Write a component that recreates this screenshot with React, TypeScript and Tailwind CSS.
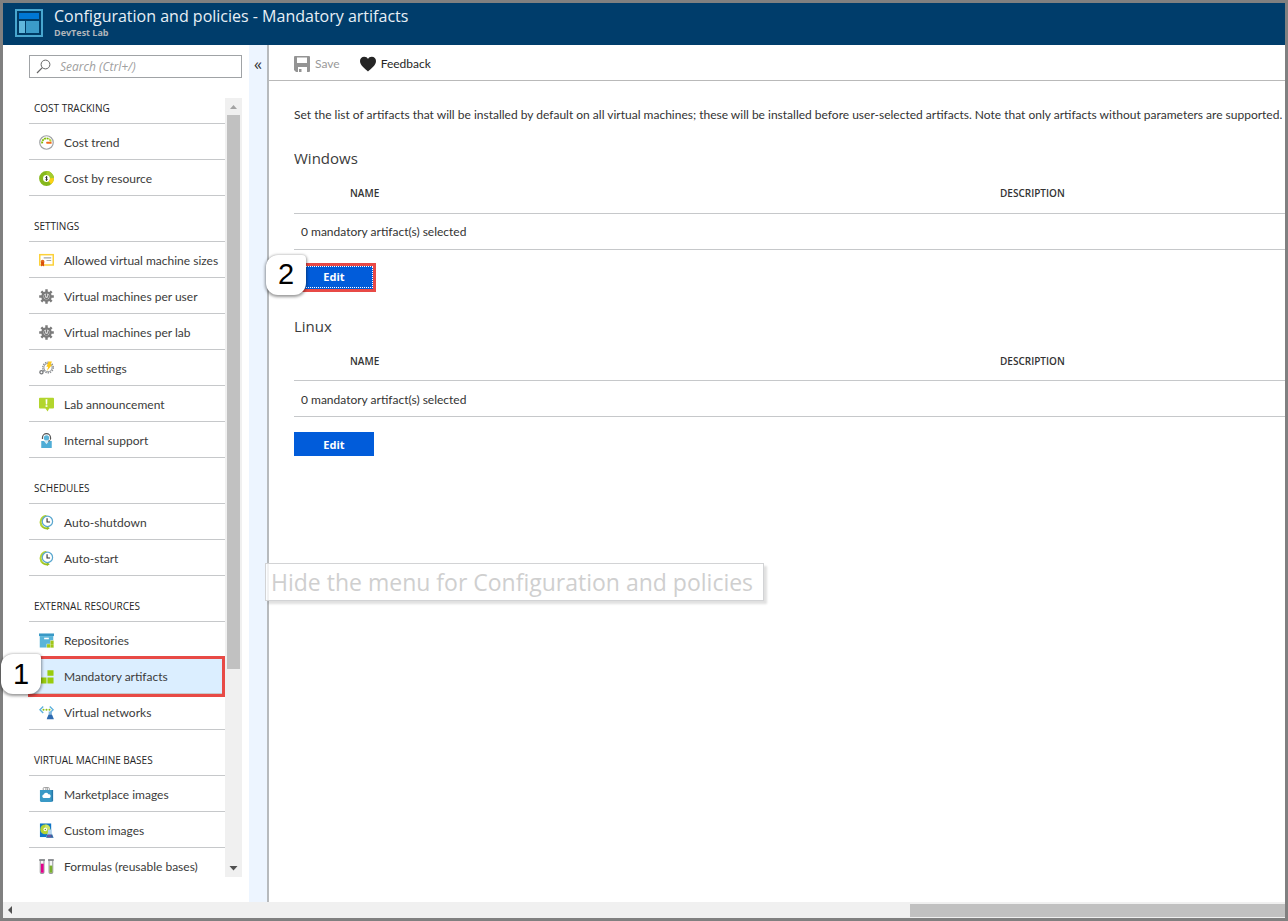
import React from "react";

const svgProps = { viewBox: "0 0 16 16", className: "size-[15px] shrink-0", "aria-hidden": true } as const;

function GaugeIcon() {
  return (
    <svg {...svgProps}>
      <circle cx="8" cy="8" r="7.2" fill="#fff" stroke="#a0a3a6" strokeWidth="1.3" />
      <path d="M3.4 9A4.7 4.7 0 0 1 11 4.6" fill="none" stroke="#7fba00" strokeWidth="2" strokeDasharray="2 .7" />
      <path d="M11 4.6A4.7 4.7 0 0 1 12.7 7" fill="none" stroke="#b8d432" strokeWidth="2" />
      <path d="M13.4 7.2v2.2H8.2a1.3 1.3 0 0 1 0-2.1z" fill="#f26a1b" />
    </svg>
  );
}

function DonutIcon() {
  return (
    <svg {...svgProps}>
      <circle cx="8" cy="8" r="5.8" fill="#fff" stroke="#86b81c" strokeWidth="4.2" />
      <path d="M8 2.2A5.8 5.8 0 0 1 13.8 8" fill="none" stroke="#a5cc2e" strokeWidth="4.2" />
      <path d="M13.8 7.6A5.8 5.8 0 0 1 11.6 12.6" fill="none" stroke="#fcd116" strokeWidth="4.2" />
      <path d="M9 6.7C8 6.1 7.1 6.4 7.2 7.1c.1.8 1.7.8 1.7 1.7 0 .8-1 1-1.9.4M8 5.5v5" fill="none" stroke="#222" strokeWidth=".9" />
    </svg>
  );
}

function CertificateIcon() {
  return (
    <svg {...svgProps}>
      <rect x=".8" y="1.8" width="14.4" height="11" fill="#fff" stroke="#fcd13a" strokeWidth="1.6" />
      <path d="M5 5.3h8M8 8h5" stroke="#a3a6a9" strokeWidth="1.3" />
      <circle cx="3.8" cy="9.2" r="2" fill="#e0661b" />
      <path d="M2.2 9.6h3.2v4.8l-1.6-1.2-1.6 1.2z" fill="#d84f0c" />
    </svg>
  );
}

function GearIcon() {
  return (
    <svg {...svgProps}>
      <g stroke="#7b7b7b" strokeWidth="2.6">
        <path d="M8 .2v15.600M.2 8h15.600M2.500 2.500l11 11M13.500 2.500l-11 11" />
      </g>
      <circle cx="8" cy="8" r="5.600" fill="#7b7b7b" />
      <circle cx="8" cy="8" r="3.200" fill="#d4d4d4" />
      <path d="M8 8V4.600M6.300 6.600a2.200 2.200 0 1 0 3.600.2" fill="none" stroke="#757575" strokeWidth="1.100" />
    </svg>
  );
}

function LabSettingsIcon() {
  return (
    <svg {...svgProps}>
      <circle cx="9.6" cy="7" r="5.6" fill="none" stroke="#8c8f92" strokeWidth="1.5" strokeDasharray="1.5 1" />
      <circle cx="9.6" cy="7" r="4.4" fill="#fff" stroke="#9a9da0" strokeWidth="1.1" />
      <circle cx="2.6" cy="12" r="1.7" fill="#fff" stroke="#77797b" strokeWidth="1.4" />
      <path d="M4 11l2-1.5" stroke="#8c8f92" strokeWidth="1.2" />
      <path d="M10.2.4h3.6l-1.6 3.6h1.9L8.4 10.6l1.4-4.4H7.9z" fill="#fcc81a" />
    </svg>
  );
}

function AnnouncementIcon() {
  return (
    <svg {...svgProps}>
      <path d="M1 .8h14a1 1 0 0 1 1 1v9.4a1 1 0 0 1-1 1h-4.2L9.2 15.5l-2.3-3.3H1a1 1 0 0 1-1-1V1.800a1 1 0 0 1 1-1z" fill="#b2d52d" />
      <path d="M7 2.500h2L8.700 8H7.300z" fill="#fff" />
      <rect x="7" y="8.800" width="2" height="1.700" fill="#fff" />
    </svg>
  );
}

function SupportIcon() {
  return (
    <svg {...svgProps}>
      <path d="M3.700 6.500V5A4.300 4.300 0 0 1 12.300 5v1.500" fill="none" stroke="#555" strokeWidth="1.300" />
      <circle cx="8" cy="5.300" r="2.800" fill="#59b4d9" />
      <path d="M2.400 8.500H13.600V16H2.400z" fill="#4fadd6" />
      <path d="M5 8.300h6L8 12z" fill="#d7ebf5" />
      <path d="M12.300 6c0 1.700-1 2.600-2.700 2.700" fill="none" stroke="#555" strokeWidth="1" />
    </svg>
  );
}

function ClockIcon() {
  return (
    <svg {...svgProps}>
      <path d="M8 .9A6.500 6.500 0 1 0 9 14.400" fill="none" stroke="#b4d334" strokeWidth="2.200" />
      <path d="M3 11.500c1.500 2 3.500 2.500 5.500 1.800V11.700l3 2.500L8.500 16v-1.200C5.500 15 3.500 13.500 3 11.500z" fill="#93bd1e" />
      <circle cx="9" cy="6.800" r="5.500" fill="#fff" stroke="#5aa7cf" strokeWidth="1.300" />
      <path d="M8.600 3.500v3.900h3.200" fill="none" stroke="#333" strokeWidth="1.200" />
    </svg>
  );
}

function RepositoryIcon() {
  return (
    <svg {...svgProps}>
      <path d="M0 .5h16v2.800H0z" fill="#3999c6" />
      <path d="M.8 3.300h14.400v12.200H.8z" fill="#59b4d9" />
      <rect x="5.500" y="5" width="5" height="1.700" fill="#fff" />
      <path d="M8 16v-4.500h4V7.800H16V16z" fill="#e4f0d0" />
      <path d="M8.600 12.100h3.200V15.500H8.600zM12.300 12.100h3.200V15.500h-3.200zM12.300 8.300h3.200v3.300h-3.200z" fill="#a2c617" />
    </svg>
  );
}

function ArtifactsIcon() {
  return (
    <svg {...svgProps}>
      <path d="M9 1.200h6.500v6H9zM2 9h6v6.500H2zM9 9h6.500v6.500H9z" fill="#99cc0d" />
    </svg>
  );
}

function NetworkIcon() {
  return (
    <svg {...svgProps}>
      <path d="M4.500 1.500L1 5l3.500 3.500M11.500 1.500L15 5l-3.500 3.500" fill="none" stroke="#5fb1dc" strokeWidth="1.500" />
      <circle cx="4.800" cy="5" r="1.100" fill="#8cbf1a" />
      <circle cx="8" cy="5" r="1.100" fill="#8cbf1a" />
      <circle cx="11.200" cy="5" r="1.100" fill="#8cbf1a" />
      <path d="M10.300 6.800h3.400v3.200l2 4.700H8.300l2-4.700z" fill="#7db5dd" />
      <path d="M10.200 10.500h3.600l2 4.700H8.200z" fill="#2f6ab0" />
    </svg>
  );
}

function MarketplaceIcon() {
  return (
    <svg {...svgProps}>
      <path d="M4.500 4V1.500Q4.500.6 5.500.6H8Q9 .6 9 1.500V4M7.300 3.500V1.500Q7.300.6 8.200.6H10Q11 .6 11 1.500V4" fill="none" stroke="#999" strokeWidth="1" />
      <path d="M1 3.200h14V15L13 16H2L1 15z" fill="#3999c6" />
      <path d="M13.500 3.200H15V15l-1.500.6z" fill="#2878a8" />
      <path d="M4.800 11.600a1.800 1.800 0 0 1 .2-3.500 2.700 2.700 0 0 1 5-.3 2 2 0 0 1 1.200 3.800z" fill="#fff" />
    </svg>
  );
}

function CustomImageIcon() {
  return (
    <svg {...svgProps}>
      <path d="M1 .5h12V15H1z" fill="#0f75c8" />
      <circle cx="6.700" cy="6.800" r="5.300" fill="#b4d334" />
      <path d="M6.700 1.500a5.300 5.300 0 0 1 5.300 5.300H6.700z" fill="#cfe56a" />
      <circle cx="6.700" cy="6.800" r="1.900" fill="#fff" />
      <circle cx="6.700" cy="6.800" r=".8" fill="#6b9e15" />
      <path d="M9.500 7h4v3.200l2.300 5.800H7.300l2.200-5.800z" fill="#b3d4ee" />
      <path d="M9 12.200h5l1.400 3.500H7.700z" fill="#36649f" />
      <path d="M9.500 13h3v1.700h-4z" fill="#8a4aa0" />
    </svg>
  );
}

function TubesIcon() {
  return (
    <svg {...svgProps}>
      <path d="M1.300 1v13q0 1.500 2 1.500t2-1.500V1zM10.700 1v13q0 1.500 2 1.500t2-1.500V1z" fill="#f5f5f5" stroke="#96999c" strokeWidth="1.100" />
      <path d="M.2 1.100h6.200M9.600 1.100h6.200" stroke="#7c7f82" strokeWidth="1.500" />
      <path d="M2 5h3v9.700H2z" fill="#e3008c" />
      <path d="M11.200 7h3v7.700h-3z" fill="#7ab02c" />
    </svg>
  );
}

type Item = { label: string; icon: React.ComponentType; selected?: boolean };

const groups: { title: string; items: Item[] }[] = [
  {
    title: "COST TRACKING",
    items: [
      { label: "Cost trend", icon: GaugeIcon },
      { label: "Cost by resource", icon: DonutIcon },
    ],
  },
  {
    title: "SETTINGS",
    items: [
      { label: "Allowed virtual machine sizes", icon: CertificateIcon },
      { label: "Virtual machines per user", icon: GearIcon },
      { label: "Virtual machines per lab", icon: GearIcon },
      { label: "Lab settings", icon: LabSettingsIcon },
      { label: "Lab announcement", icon: AnnouncementIcon },
      { label: "Internal support", icon: SupportIcon },
    ],
  },
  {
    title: "SCHEDULES",
    items: [
      { label: "Auto-shutdown", icon: ClockIcon },
      { label: "Auto-start", icon: ClockIcon },
    ],
  },
  {
    title: "EXTERNAL RESOURCES",
    items: [
      { label: "Repositories", icon: RepositoryIcon },
      { label: "Mandatory artifacts", icon: ArtifactsIcon, selected: true },
      { label: "Virtual networks", icon: NetworkIcon },
    ],
  },
  {
    title: "VIRTUAL MACHINE BASES",
    items: [
      { label: "Marketplace images", icon: MarketplaceIcon },
      { label: "Custom images", icon: CustomImageIcon },
      { label: "Formulas (reusable bases)", icon: TubesIcon },
    ],
  },
];

function StepBadge({ step }: { step: number }) {
  return (
    <span className="absolute -top-1 -left-7 z-20 flex size-10 items-center justify-center rounded-xl rounded-tr-sm bg-white font-['Liberation_Sans',sans-serif] text-[29px] leading-none font-normal text-black shadow-[0_1px_3px_1px_rgba(0,0,0,0.4)]">
      {step}
    </span>
  );
}

function MenuItem({ item }: { item: Item }) {
  const Icon = item.icon;
  return (
    <li className="relative">
      <a
        href="#"
        aria-current={item.selected ? "page" : undefined}
        className={
          "flex h-9 items-center gap-2.5 border-b border-[#c6c8ca] pt-0.5 pl-2.5 text-[12px] whitespace-nowrap text-[#3b3b3b] " +
          (item.selected ? "bg-[#dbeeff]" : "")
        }
      >
        <Icon />
        {item.label}
      </a>
      {item.selected && (
        <>
          <span className="pointer-events-none absolute -inset-x-px -top-0.5 -bottom-[3px] z-10 mr-px border-3 border-[#e84a46]" />
          <StepBadge step={1} />
        </>
      )}
    </li>
  );
}

function Sidebar() {
  return (
    <aside className="flex w-[246px] shrink-0 flex-col pt-2.5 pr-[7px] pb-[25px] pl-[26px]">
      <label className="flex h-[23px] shrink-0 items-center gap-2 border border-[#a0a3a6] px-1.5">
        <svg viewBox="0 0 16 16" className="size-4 shrink-0" aria-hidden="true">
          <circle cx="9.500" cy="5.500" r="4.400" fill="none" stroke="#666" strokeWidth="1" />
          <path d="M6.300 8.700L1 14" stroke="#666" strokeWidth="1.200" />
        </svg>
        <input
          type="search"
          aria-label="Search menu"
          placeholder="Search (Ctrl+/)"
          className="w-full min-w-0 bg-transparent font-['Open_Sans',sans-serif] text-[12px] outline-none placeholder:text-[#a0a0a0] placeholder:italic"
        />
      </label>
      <div className="mt-5 flex min-h-0 flex-1">
        <nav className="min-h-0 min-w-0 flex-1 overflow-y-clip">
          {groups.map((group) => (
            <section key={group.title} className="pt-5 first:pt-0">
              <h2 className="flex h-[26px] items-center border-b border-[#c6c8ca] pb-1 pl-[5px] font-['Open_Sans',sans-serif] text-[10px] text-[#252525]">
                {group.title}
              </h2>
              <ul>
                {group.items.map((item) => (
                  <MenuItem key={item.label} item={item} />
                ))}
              </ul>
            </section>
          ))}
        </nav>
        <div className="flex w-[17px] shrink-0 flex-col items-center bg-[#f0f0f0]" aria-hidden="true">
          <svg viewBox="0 0 17 17" className="size-[17px] shrink-0">
            <path d="M5 11l3.500-4 3.500 4z" fill="#a3a3a3" />
          </svg>
          <div className="min-h-0 w-[13px] flex-1">
            <div className="h-[74.4%] bg-[#c1c1c1]" />
          </div>
          <svg viewBox="0 0 17 17" className="size-[17px] shrink-0">
            <path d="M4.500 6h8l-4 4.500z" fill="#505050" />
          </svg>
        </div>
      </div>
    </aside>
  );
}

function ArtifactSection({ title, step }: { title: string; step?: number }) {
  return (
    <section className="flex flex-col">
      <h2 className="h-[22px] font-['Open_Sans',sans-serif] text-[15px] leading-[22px] text-[#3b3b3b]">{title}</h2>
      <table className="mt-1 w-full table-fixed border-collapse text-left text-[#333]">
        <thead>
          <tr className="h-10 border-b border-[#c6c8ca] font-['Open_Sans',sans-serif] text-[10px]">
            <td className="w-14" />
            <th scope="col" className="w-[650px] pt-0.5 font-semibold">NAME</th>
            <th scope="col" className="pt-0.5 font-semibold">DESCRIPTION</th>
          </tr>
        </thead>
        <tbody>
          <tr className="h-9 border-b border-[#c6c8ca] text-[12px]">
            <td colSpan={3} className="pt-0.5 pl-[7px]">0 mandatory artifact(s) selected</td>
          </tr>
        </tbody>
      </table>
      <div className="relative mt-[15px] w-20">
        <button
          type="button"
          className={
            "block h-6 w-full bg-[#015cda] pt-0.5 font-['Open_Sans',sans-serif] text-[11px] font-bold text-white " +
            (step ? "outline-1 -outline-offset-2 outline-dotted outline-white" : "")
          }
        >
          Edit
        </button>
        {step && (
          <>
            <span className="pointer-events-none absolute -inset-0.5 -bottom-[3px] z-10 border-3 border-[#e84a46]" />
            <div className="absolute -top-1.5 left-0">
              <StepBadge step={step} />
            </div>
          </>
        )}
      </div>
    </section>
  );
}

export default function App() {
  return (
    <div className="flex h-screen flex-col border-3 border-[#808080] bg-white font-['Lato','Open_Sans',sans-serif]">
      <header className="flex h-[42px] shrink-0 items-center gap-[11px] bg-[#003d6b] pb-0.5 pl-3 font-['Open_Sans',sans-serif]">
        <svg viewBox="0 0 28 28" className="size-7 shrink-0" aria-hidden="true">
          <rect x="1" y="1" width="26" height="26" fill="#003b66" stroke="#48a6cf" strokeWidth="2" />
          <path d="M4 4h20v6H4z" fill="#0077d4" />
          <path d="M4 12h6v12H4z" fill="#60b7dc" />
          <path d="M11 12h13v12H11z" fill="#3b9bc9" />
        </svg>
        <div>
          <h1 className="text-[16px] leading-5 text-[#e8eff5]">Configuration and policies - Mandatory artifacts</h1>
          <p className="text-[9px] leading-[14px] font-bold text-[#b0b5ba]">DevTest Lab</p>
        </div>
      </header>

      <div className="flex min-h-0 flex-1">
        <Sidebar />
        <div className="relative w-5 shrink-0 border-r-2 border-[#b7babd] bg-[#edf5ff]">
          <button
            type="button"
            aria-label="Hide the menu"
            className="mt-2 block h-[22px] w-full text-center font-['Open_Sans',sans-serif] text-[16px] leading-5 text-[#333]"
          >
            «
          </button>
          <div
            role="tooltip"
            className="absolute top-[518px] left-4 z-10 flex h-[38px] items-center border border-[#d2d3d5] bg-white/80 pr-2.5 pl-[5px] font-['Open_Sans',sans-serif] text-[23px] whitespace-nowrap text-[#cfcfcf] shadow-[3px_3px_2px_rgba(0,0,0,0.12)]"
          >
            Hide the menu for Configuration and policies
          </div>
        </div>
        <main className="flex min-w-0 flex-1 flex-col">
          <div className="flex h-9 shrink-0 items-center gap-5 border-b border-[#b9b9b9] pt-0.5 pl-[25px] text-[12px]">
            <button type="button" disabled className="flex items-center gap-[5px] text-[#999]">
              <svg viewBox="0 0 16 16" className="size-4" aria-hidden="true">
                <path
                  fillRule="evenodd"
                  d="M1 0h14a1 1 0 0 1 1 1v14a1 1 0 0 1-1 1h-2v-5H4v5H2l-2-2V1a1 1 0 0 1 1-1zM3 1.500V7h10V1.500z"
                  fill="#949494"
                />
                <path d="M5 13h2.500v3H5z" fill="#949494" />
              </svg>
              Save
            </button>
            <button type="button" className="flex items-center gap-[5px] text-[#252525]">
              <svg viewBox="0 0 16 16" className="size-4" aria-hidden="true">
                <path d="M8 15.500C5.500 13 0 9.500 0 5 0 2.500 1.800.8 4.200.8 6 .8 7.300 1.700 8 3 8.700 1.700 10 .8 11.800.8 14.200.8 16 2.500 16 5c0 4.500-5.500 8-8 10.500z" fill="#252525" />
              </svg>
              Feedback
            </button>
          </div>
          <div className="flex min-h-0 flex-1 flex-col overflow-y-clip pt-[25px] pl-[25px]">
            <p className="text-[12px] leading-[18px] text-[#333]">
              Set the list of artifacts that will be installed by default on all virtual machines; these will be
              installed before user-selected artifacts. Note that only artifacts without parameters are supported.
            </p>
            <div className="mt-[23px] flex flex-col gap-[26px]">
              <ArtifactSection title="Windows" step={2} />
              <ArtifactSection title="Linux" />
            </div>
          </div>
        </main>
      </div>

      <div className="flex h-4 shrink-0 items-center bg-[#f0f0f0]" aria-hidden="true">
        <svg viewBox="0 0 16 16" className="size-4 shrink-0">
          <path d="M9 4v8L5 8z" fill="#505050" />
        </svg>
        <div className="flex h-[13px] flex-1 justify-end">
          <div className="w-[29.6%] bg-[#c1c1c1]" />
        </div>
      </div>
    </div>
  );
}
